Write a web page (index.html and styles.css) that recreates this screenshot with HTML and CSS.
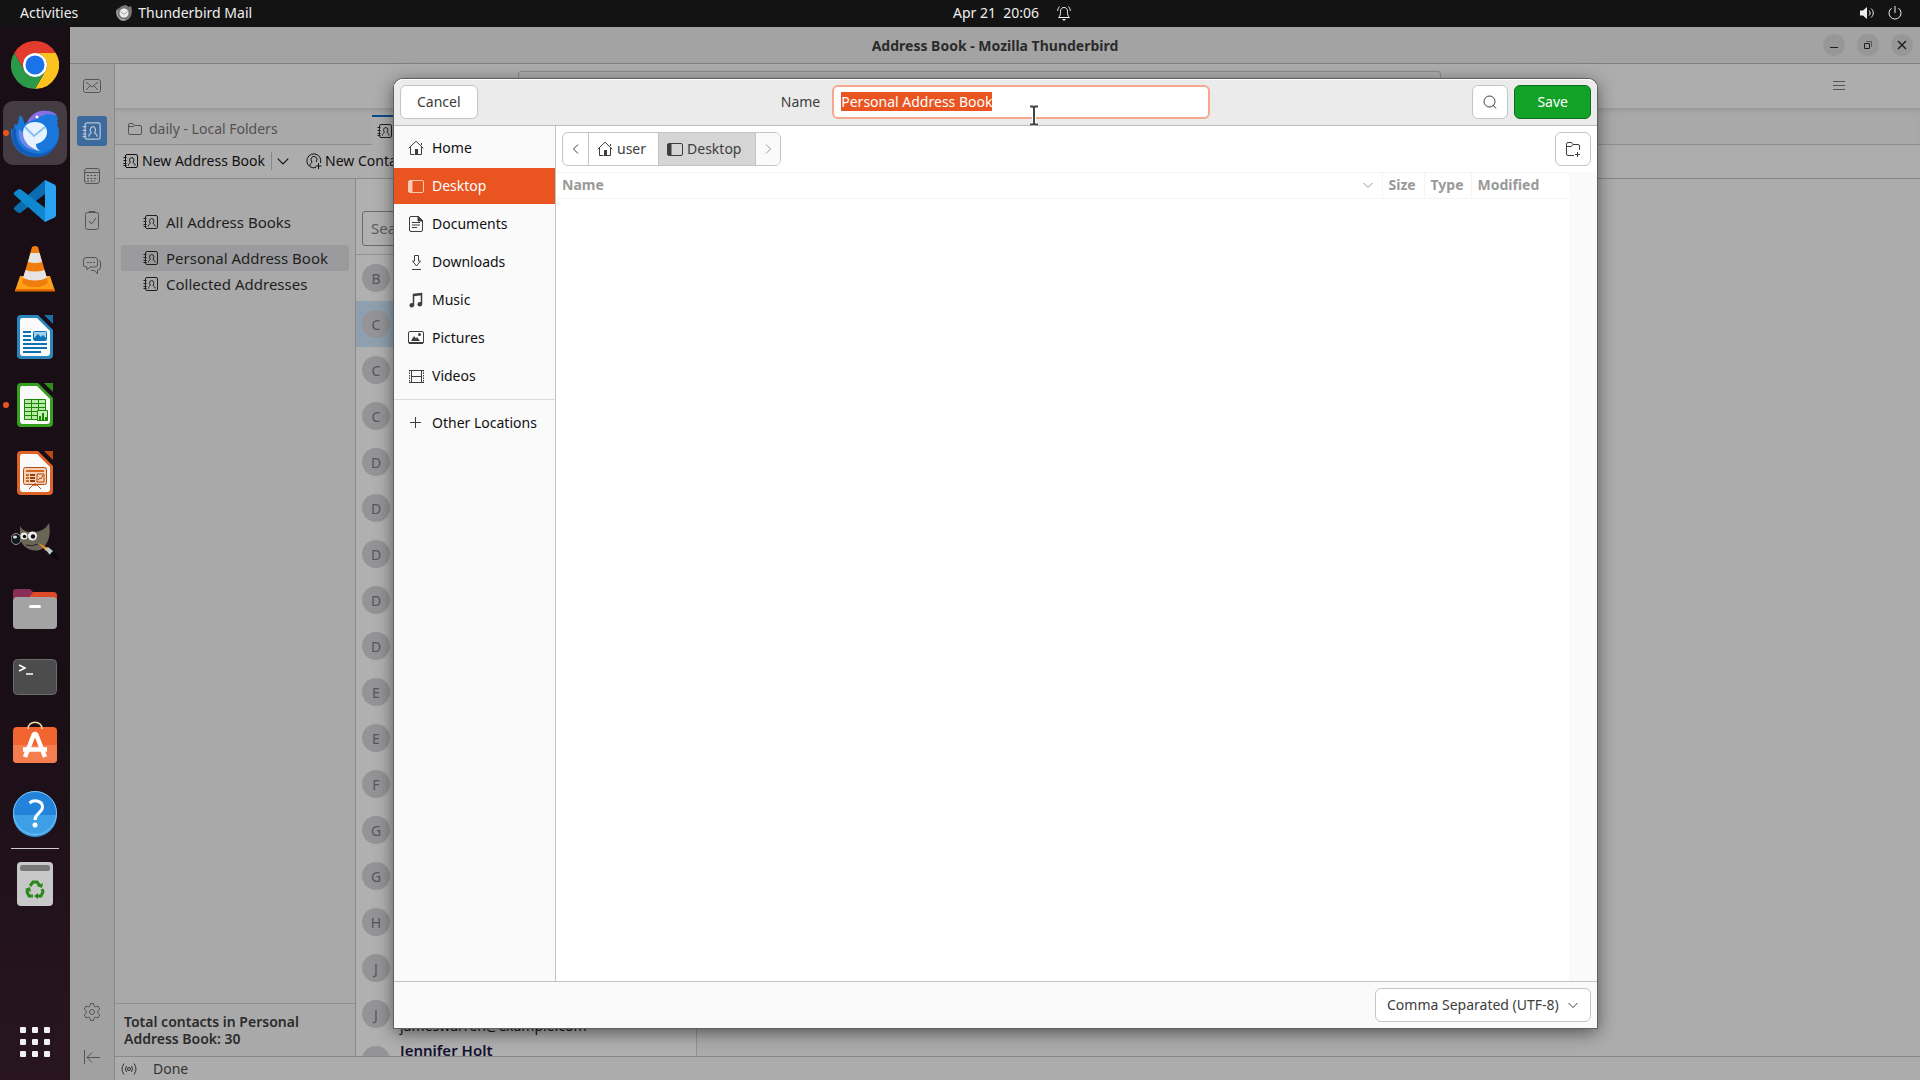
FILE: index.html
```html
<!DOCTYPE html>
<html lang="en">
<head>
  <meta charset="UTF-8" />
  <title>Address Book - Mozilla Thunderbird</title>
  <link rel="stylesheet" href="styles.css">
</head>
<body>

  <!-- shared icons -->
  <svg class="defs" aria-hidden="true">
    <symbol id="i-book" viewBox="0 0 16 16">
      <rect x="2.500" y="1.500" width="12" height="13" rx="1.500"/>
      <path d="M.5 4.500h3M.5 7.500h3M.5 10.500h3M.5 12.500h3M5.500 12.500v-1c0-1 1.800-1.200 1.800-2.200C6 7.500 6.500 4.500 8.700 4.500s2.700 3 1.400 4.800c0 1 1.900 1.200 1.900 2.200v1"/>
    </symbol>
    <symbol id="i-home" viewBox="0 0 16 16">
      <path d="M.7 8.300 8 1.200l7.300 7.100M2.500 7v7.500h4M13.500 7v7.500h-4M13.500 5V3"/>
      <path d="M7 9h3v6H7z" fill="currentColor" stroke="none"/>
    </symbol>
    <symbol id="i-desktop" viewBox="0 0 16 16">
      <rect x=".5" y="2.500" width="15" height="12" rx="1.500"/>
      <path d="M1 3h3.500v11H1z" fill="currentColor" stroke="none"/>
    </symbol>
    <symbol id="i-down" viewBox="0 0 12 12"><path d="M1.500 4 6 8.500 10.500 4"/></symbol>
  </svg>

  <header class="topbar">
    <div class="topbar-side">
      <button class="activities">Activities</button>
      <button class="app-menu">
        <svg width="16" height="16" viewBox="0 0 16 16"><path d="M1 4c2 0 4-4 9-4l3 2 2-1c2 5 1 14-7 15C2 16-1 10 1 4z" fill="#777"/><path d="M1 5c-1 7 3 10 8 10" fill="none" stroke="#bbb"/><circle cx="8" cy="8" r="4.500" fill="#eee"/><path d="m4.500 6.500 3.500 3 3.500-3" fill="none" stroke="#999"/></svg>
        Thunderbird Mail
      </button>
    </div>
    <button class="clock">
      <span>Apr 21&nbsp; 20:06</span>
      <svg class="line" width="14" height="16" viewBox="0 0 14 16"><path d="M1.500 12.500h11c-1.700-1.500-2-3-2-6 0-2.500-1.200-4-3.500-4s-3.500 1.500-3.500 4c0 3-.3 4.500-2 6zM2.500 1.500C1.500 2.500.800 4 .700 6M11.500 1.500c1 1 1.700 2.500 1.800 4.500"/><path d="M5 14h4l-2 2z" fill="currentColor" stroke="none"/></svg>
    </button>
    <div class="topbar-side topbar-right">
      <svg class="line" width="14" height="14" viewBox="0 0 14 14"><path d="M0 4.500h3L7 1v12L3 9.500H0z" fill="currentColor" stroke="none"/><path d="M9 4.500c1.500 1.500 1.500 3.500 0 5M11 2.500c3 2.500 3 6.500 0 9"/></svg>
      <svg class="line" width="14" height="14" viewBox="0 0 14 14"><path d="M7 0v7M3.500 2.200a6 6 0 1 0 7 0"/></svg>
    </div>
  </header>

  <div class="desktop">
    <nav class="dock">
      <button class="tile" aria-label="Chrome"><svg viewBox="0 0 48 48"><path d="M3.200 12A24 24 0 0 1 44.800 12H24a12 12 0 0 0-10.400 18z" fill="#e33b2e"/><path d="M24 12h20.800A24 24 0 0 1 24 48l10.400-18A12 12 0 0 0 24 12z" fill="#fcc31e"/><path d="M24 48A24 24 0 0 1 3.200 12l10.400 18a12 12 0 0 0 20.800 0z" fill="#2a9a48"/><circle cx="24" cy="24" r="12" fill="#fff"/><circle cx="24" cy="24" r="9.500" fill="#1a73e8"/></svg></button>
      <button class="tile active running" aria-label="Thunderbird"><svg viewBox="0 0 48 48"><path d="M9 6c-2 4-1 7-3 10-2-1-3 0-3 0 1 2 0 4-1 6l-2-3C-1 35 7 48 25 48c13 0 23-10 23-24 0-4-1-7-2-9h1l-1-4h1l-1-4c-2-4-8-6-14-5-7 1-13 5-16 11l-3 2C13 12 12 8 9 6z" fill="#1a78dc"/><path d="M16 14C20 5 27 1 35 2c4 0 8 1 11 4l-10-1-8 3c-4 2-8 4-12 6z" fill="#8a6ee6"/><path d="M5 20C4 36 13 44 28 45c8-1 15-6 18-13-2 10-11 16-21 16C8 47-2 34 2 19z" fill="#125bb8"/><path d="M8 20c-2 9 3 17 11 20l9 2c-6-4-10-8-12-14z" fill="#7387ea"/><path d="M12 24c0-7 5-11 12-11s12 4 12 10-4 10-11 12c0 4 2 5 4 7-9-2-17-9-17-18z" fill="#e6f3ff"/><path d="m14 18 9 9 11-9" fill="none" stroke="#8bbcf0" stroke-width="2"/><circle cx="26" cy="8" r="1.500" fill="#fff"/></svg></button>
      <button class="tile" aria-label="Visual Studio Code"><svg viewBox="0 0 48 48"><path d="M34 3 3.500 30Q2 31.500 3.500 33L7 35.500q1.500 1 3 0L34 17z" fill="#0b6cb0"/><path d="M34 45 3.500 18Q2 16.500 3.500 15L7 12.500q1.500-1 3 0L34 31z" fill="#0f88d0"/><path d="m34 3 9.500 4.500Q45 8.500 45 10v28q0 1.500-1.500 2.500L34 45z" fill="#2aa2f2"/></svg></button>
      <button class="tile" aria-label="VLC"><svg viewBox="0 0 48 48"><path d="M9 31h30l5 15H4z" fill="#ffa21a"/><path d="M4 44h40v2.500H4z" fill="#e06a00"/><path d="M21 2q3-2 6 0l10 35q-2 5-13 5t-13-5z" fill="#f07d0e"/><path d="M19.500 8h9l2.500 9q-7 2-14 0zM14.500 25q9.500 3 19 0l2.500 8q-12 5-24 0z" fill="#e4e4e4"/></svg></button>
      <button class="tile" aria-label="Writer"><svg viewBox="0 0 48 48"><path d="M10 2h17l15 15v25q0 4-4 4H10q-4 0-4-4V6q0-4 4-4z" fill="#2a86bd"/><path d="M11 5h15l13 13v22q0 3-3 3H12q-3 0-3-3V8q0-3 2-3z" fill="#fafafa"/><path d="M33 2h9v9z" fill="#1b6fa5"/><path d="M12 19h8m-8 4h8m-8 4h8m-8 4h24m-24 4h24m-24 4h18" stroke="#0b72b5" stroke-width="2"/><rect x="22.500" y="18.500" width="13" height="9" rx="1" fill="#9ed2ee" stroke="#0b72b5"/><path d="M23 27v-2l4-4 3 3 2-2 3 3v2z" fill="#0b72b5"/></svg></button>
      <button class="tile running" aria-label="Calc"><svg viewBox="0 0 48 48"><path d="M10 2h17l15 15v25q0 4-4 4H10q-4 0-4-4V6q0-4 4-4z" fill="#35a01d"/><path d="M11 5h15l13 13v22q0 3-3 3H12q-3 0-3-3V8q0-3 2-3z" fill="#fafafa"/><path d="M33 2h9v9z" fill="#2f8f18"/><path d="M13.500 18.500h21v20h-21z" fill="#b6eaa6"/><path d="M13.500 18.500h21v20h-21zM13 22.500h22m-22 4h22m-22 4h22m-22 4h22M20.500 18v21m7-21v21" stroke="#188803" fill="none"/><path d="M26.500 29.500h10v10h-10z" fill="#c5f0b8" stroke="#188803"/><path d="M29 39v-4m3 4v-7m3 7v-3" stroke="#188803" stroke-width="2"/></svg></button>
      <button class="tile" aria-label="Impress"><svg viewBox="0 0 48 48"><path d="M10 2h17l15 15v25q0 4-4 4H10q-4 0-4-4V6q0-4 4-4z" fill="#dd6429"/><path d="M11 5h15l13 13v22q0 3-3 3H12q-3 0-3-3V8q0-3 2-3z" fill="#fafafa"/><path d="M33 2h9v9z" fill="#b84a10"/><rect x="12.500" y="18.500" width="23" height="17" rx="2" fill="#f5d1b8" stroke="#b84a10"/><path d="M15 22h18m-18 4h3m-3 3h3m-3 3h3" stroke="#d2691e" stroke-width="2"/><path d="M19 26h5m-5 3h5m-5 3h5" stroke="#93400e" stroke-width="2"/><path d="M26 25h7v8h-7zM27 31l2-2 1 1 2-4M18 40l4-4h4l4 4M24 34v3" stroke="#b84a10" fill="none"/></svg></button>
      <button class="tile" aria-label="GIMP"><svg viewBox="0 0 48 48"><path d="M9 9c2 4 8 7 13 6 7 0 13-3 16-9 2 11 0 20-7 26-8 4-18 0-22-9z" fill="#6b6557"/><ellipse cx="5" cy="22" rx="5" ry="5.500" fill="#14191b" stroke="#8c9799"/><ellipse cx="4" cy="20" rx="2" ry="1.500" fill="#dde"/><circle cx="13" cy="19" r="3.500" fill="#eee"/><circle cx="21.500" cy="19" r="4.500" fill="#eee"/><circle cx="13.500" cy="19.500" r="1.800" fill="#111"/><circle cx="22" cy="19.500" r="2.200" fill="#111"/><path d="M15 28q7 2 12-1" stroke="#222" fill="none"/><path d="m27 26 10 5-2 3z" fill="#ee941e"/><path d="m34 32 3-2 5 4-3 4z" fill="#bfc8cc"/><path d="m40 36 3-2q4 4 5 9-5-1-9-5z" fill="#08080a"/></svg></button>
      <button class="tile" aria-label="Files"><svg viewBox="0 0 48 48"><path d="M2 14V7q0-3 3-3h14l3 3h20q4 0 4 4v4z" fill="#8a2e58"/><path d="M22 7h20q4 0 4 4v4H16z" fill="#dd4a25"/><rect x="2" y="12" width="44" height="32" rx="4" fill="#a3a3a3"/><rect x="18" y="20" width="12" height="3" rx="1.500" fill="#fff"/></svg></button>
      <button class="tile" aria-label="Terminal"><svg viewBox="0 0 48 48"><rect x="2.500" y="6.500" width="43" height="35" rx="4" fill="#4c4c4c" stroke="#6c6c6c"/><path d="m8 12 6 3-6 3M15 21h7" fill="none" stroke="#fff" stroke-width="1.500"/></svg></button>
      <button class="tile" aria-label="Software"><svg viewBox="0 0 48 48"><rect x="2" y="6" width="44" height="36" rx="4" fill="#f26430"/><path d="M2 24h44v14q0 4-4 4H6q-4 0-4-4z" fill="#f47e50"/><path d="M17 8c0-9 14-9 14 0" fill="none" stroke="#f3d9a4" stroke-width="1.500"/><path d="m14 36 9-23h2l9 23M12 28.500h24" fill="none" stroke="#fff" stroke-width="4.500" stroke-linejoin="bevel"/></svg></button>
      <button class="tile" aria-label="Help"><svg viewBox="0 0 48 48"><circle cx="24" cy="24" r="22" fill="#2383da"/><path d="M2 26a22 22 0 0 0 44 0z" fill="#3e9fe6"/><circle cx="24" cy="24" r="21.500" fill="none" stroke="#7fc2f4"/><path d="M18.500 14c5-4 13-2 13 4 0 6-7.500 6-7.500 13" fill="none" stroke="#fff" stroke-width="3"/><circle cx="24" cy="36" r="2.500" fill="#fff"/></svg></button>
      <hr class="dock-sep">
      <button class="tile" aria-label="Trash"><svg viewBox="0 0 48 48"><rect x="6" y="2" width="36" height="44" rx="4" fill="#c8c8c8"/><rect x="9" y="5" width="30" height="6" rx="2.500" fill="#777"/><path d="m19 26 3-4h4l3 4M31 29l1 3-2 4h-5M22 36h-4l-2-4 1-3" fill="none" stroke="#298a1c" stroke-width="3"/><path d="m26 26 5 2 1-5zM27 33v6l-4-3zM14 29l5-2 1 5z" fill="#298a1c"/></svg></button>
      <button class="tile apps" aria-label="Show Applications"><svg viewBox="0 0 48 48"><g fill="#f2f2f2"><rect x="9" y="9" width="6" height="6" rx="1"/><rect x="21" y="9" width="6" height="6" rx="1"/><rect x="33" y="9" width="6" height="6" rx="1"/><rect x="9" y="21" width="6" height="6" rx="1"/><rect x="21" y="21" width="6" height="6" rx="1"/><rect x="33" y="21" width="6" height="6" rx="1"/><rect x="9" y="33" width="6" height="6" rx="1"/><rect x="21" y="33" width="6" height="6" rx="1"/><rect x="33" y="33" width="6" height="6" rx="1"/></g></svg></button>
    </nav>

    <div class="window">
      <div class="titlebar">
        <h1>Address Book - Mozilla Thunderbird</h1>
        <div class="win-buttons">
          <button aria-label="Minimize"><svg class="line" width="10" height="10" viewBox="0 0 10 10"><path d="M1 7.500h8"/></svg></button>
          <button aria-label="Restore"><svg class="line" width="10" height="10" viewBox="0 0 10 10"><path d="M1.500 3.500h5v5h-5z"/><path d="M3 1.500h5.500V7" opacity=".5"/></svg></button>
          <button aria-label="Close"><svg class="line" width="10" height="10" viewBox="0 0 10 10"><path d="m1 1 8 8M9 1 1 9" stroke-width="1.500"/></svg></button>
        </div>
      </div>

      <div class="client">
        <nav class="spaces">
          <button aria-label="Mail"><svg class="line" width="18" height="18" viewBox="0 0 18 18"><rect x=".5" y="2.500" width="17" height="13" rx="2"/><path d="m3 5 6 5 6-5M3 13l4-4M15 13l-4-4"/></svg></button>
          <button class="current" aria-label="Address Book"><svg class="line" width="20" height="20"><use href="#i-book"/></svg></button>
          <button aria-label="Calendar"><svg class="line" width="18" height="18" viewBox="0 0 18 18"><rect x="1.500" y="1.500" width="15" height="15" rx="2.500"/><path d="M2 5.500h14"/><path d="M4 8.500h11M4 11.500h11M4 14h8" stroke-dasharray="2 1.500"/></svg></button>
          <button aria-label="Tasks"><svg class="line" width="18" height="20" viewBox="0 0 18 20"><rect x="2.500" y="1.500" width="13" height="17" rx="2"/><path d="M6 2V.5h6V2M6 10l2.500 3L13 7"/></svg></button>
          <button aria-label="Chat"><svg class="line" width="18" height="18" viewBox="0 0 18 18"><path d="M3 .5h9q2.500 0 2.500 2.500v5q0 2-2.500 2H7l-3 3v-3H3Q.5 10 .5 8V3Q.5.500 3 .500zM16 3q1.500 1 1.500 3v4q0 3-3 3v4l-3-3.500H8"/><path d="M4 5.500h8" stroke-dasharray="2 1"/></svg></button>
          <button class="settings" aria-label="Settings"><svg class="line" width="18" height="18" viewBox="0 0 18 18"><circle cx="9" cy="9" r="2.500"/><path d="M7.500.5h3l.5 2.500 1.500 1 2.500-1 1.800 3-2 1.800v2.400l2 1.800-1.800 3-2.500-1-1.500 1-.5 2.500h-3L7 15l-1.500-1L3 15l-1.800-3 2-1.800V7.800L1.200 6 3 3l2.500 1L7 3z"/></svg></button>
          <button aria-label="Collapse"><svg class="line" width="18" height="16" viewBox="0 0 18 16"><path d="M1.500 1v14M4 8.500h13M9 3.500l-5 5 5 5"/></svg></button>
        </nav>

        <div class="content">
          <div class="unified">
            <div class="global-search"></div>
            <button class="hamburger" aria-label="Menu"><svg class="line" width="12" height="12" viewBox="0 0 12 12"><path d="M0 1.500h12M0 5.500h12M0 9.500h12"/></svg></button>
          </div>
          <div class="tabs">
            <button class="tab"><svg class="line" width="14" height="14" viewBox="0 0 14 14"><path d="M.5 10.500V3q0-1.500 1.500-1.500h3l1.500 2H12q1.500 0 1.500 1.500v6q0 1.500-1.500 1.500H2Q.5 12.500.5 11zM1 4.500h5"/></svg>daily - Local Folders</button>
            <button class="tab tab-active" aria-label="Address Book"><svg class="line" width="16" height="16"><use href="#i-book"/></svg></button>
          </div>
          <div class="toolbar">
            <button><svg class="line" width="16" height="16"><use href="#i-book"/></svg>New Address Book</button>
            <button class="drop" aria-label="More"><svg class="line" width="14" height="14"><use href="#i-down"/></svg></button>
            <button><svg class="line" width="16" height="16" viewBox="0 0 16 16"><path d="M10 14.500A7 7 0 1 1 14.500 10M4 13v-1.500c0-1 2-1.300 2-2.500C4 6 5.500 3.500 8 3.500S12 6 10 9M12.500 10v6M9.500 13h6"/></svg>New Contact</button>
          </div>

          <div class="panes">
            <aside class="books">
              <ul>
                <li class="all"><svg class="line" width="16" height="16"><use href="#i-book"/></svg>All Address Books</li>
                <li class="selected"><svg class="line" width="16" height="16"><use href="#i-book"/></svg>Personal Address Book</li>
                <li><svg class="line" width="16" height="16"><use href="#i-book"/></svg>Collected Addresses</li>
              </ul>
              <p class="total">Total contacts in Personal Address Book: 30</p>
            </aside>
            <section class="contacts">
              <div class="contact-search"><input type="search" aria-label="Search contacts" placeholder="Search"></div>
              <ul>
                <li><span class="avatar">B</span></li>
                <li class="selected"><span class="avatar">C</span></li>
                <li><span class="avatar">C</span></li>
                <li><span class="avatar">C</span></li>
                <li><span class="avatar">D</span></li>
                <li><span class="avatar">D</span></li>
                <li><span class="avatar">D</span></li>
                <li><span class="avatar">D</span></li>
                <li><span class="avatar">D</span></li>
                <li><span class="avatar">E</span></li>
                <li><span class="avatar">E</span></li>
                <li><span class="avatar">F</span></li>
                <li><span class="avatar">G</span></li>
                <li><span class="avatar">G</span></li>
                <li><span class="avatar">H</span></li>
                <li><span class="avatar">J</span></li>
                <li><span class="avatar">J</span><div class="who"><b></b><span>jameswarren@example.com</span></div></li>
                <li><span class="avatar"></span><div class="who"><b>Jennifer Holt</b></div></li>
              </ul>
            </section>
          </div>
          <footer class="status">
            <svg class="line" width="16" height="14" viewBox="0 0 16 14"><circle cx="8" cy="7" r="1.500"/><path d="M5.500 4q-2 3 0 6M10.500 4q2 3 0 6M3 1.500q-4 5.500 0 11M13 1.500q4 5.500 0 11"/></svg>
            Done
          </footer>
        </div>
      </div>

      <form class="dialog" role="dialog" aria-label="Save">
        <div class="dialog-head">
          <button type="button" class="btn">Cancel</button>
          <div class="name-field">
            <label for="name">Name</label>
            <input id="name" type="text" value="Personal Address Book" autocomplete="off" spellcheck="false" autofocus>
          </div>
          <div class="head-actions">
            <button type="button" class="btn icon-btn" aria-label="Search"><svg class="line" width="16" height="16" viewBox="0 0 16 16"><circle cx="7.500" cy="7.500" r="5.500"/><path d="m11 11 3 3.500"/></svg></button>
            <button type="button" class="btn save">Save</button>
          </div>
        </div>

        <div class="dialog-body">
          <ul class="places">
            <li><a href="#"><svg class="line" width="16" height="16"><use href="#i-home"/></svg>Home</a></li>
            <li class="current"><a href="#"><svg class="line" width="16" height="16"><use href="#i-desktop"/></svg>Desktop</a></li>
            <li><a href="#"><svg class="line" width="16" height="16" viewBox="0 0 16 16"><path d="M3 .5h7.500l4 4V14q0 1.500-1.500 1.500H3Q1.500 15.500 1.500 14V2Q1.500.5 3 .5zM4 6.500h8M4 9h8M4 11.500h5"/><path d="M10 0v5h5z" fill="currentColor"/></svg>Documents</a></li>
            <li><a href="#"><svg class="line" width="16" height="16" viewBox="0 0 16 16"><path d="M6.500 1.500h4V7h2l-4 5-4-5h2zM4 15.500h9"/></svg>Downloads</a></li>
            <li><a href="#"><svg class="line" width="16" height="16" viewBox="0 0 16 16"><path d="M5.500 13V2.500l8-1V12M5.500 3.500l8-1" stroke-width="1.500"/><g fill="currentColor" stroke="none"><circle cx="3.800" cy="13.200" r="2.300"/><circle cx="11.800" cy="12.200" r="2.300"/></g></svg>Music</a></li>
            <li><a href="#"><svg class="line" width="16" height="16" viewBox="0 0 16 16"><rect x=".5" y="1.500" width="15" height="12" rx="1.500"/><path d="M1 12h14v2H1zM3 11l3-5 2 2.500L9 7l3 4z" fill="currentColor" stroke="none"/><circle cx="11.500" cy="4.500" r="1.500" fill="currentColor" stroke="none"/></svg>Pictures</a></li>
            <li><a href="#"><svg class="line" width="16" height="16" viewBox="0 0 16 16"><path d="M3.500 2.500h10v12h-10zM3.500 8.500h10"/><path d="M1.500 2v13M15.500 2v13" stroke-dasharray="1.500 1"/><path d="M1 2.500h15M1 14.500h15"/></svg>Videos</a></li>
            <li class="other"><a href="#"><svg class="line" width="16" height="16" viewBox="0 0 16 16"><path d="M2 7.500h11M7.500 2v11"/></svg>Other Locations</a></li>
          </ul>

          <div class="files">
            <div class="pathbar">
              <div class="crumbs">
                <button type="button" aria-label="Back"><svg class="line" width="12" height="12" viewBox="0 0 12 12"><path d="M8 1.500 3.500 6 8 10.500"/></svg></button>
                <button type="button"><svg class="line" width="16" height="16"><use href="#i-home"/></svg>user</button>
                <button type="button" class="here"><svg class="line" width="16" height="16"><use href="#i-desktop"/></svg>Desktop</button>
                <button type="button" class="off" aria-label="Forward"><svg class="line" width="12" height="12" viewBox="0 0 12 12"><path d="M4 1.500 8.500 6 4 10.500"/></svg></button>
              </div>
              <button type="button" class="btn icon-btn" aria-label="New folder"><svg class="line" width="16" height="16" viewBox="0 0 16 16"><path d="M9 14.500H3Q1.500 14.500 1.500 13V3Q1.500 1.500 3 1.500h3.500l1.500 2h5q1.500 0 1.500 1.500v4M2 5.500h4.500l1.500-2M12.500 11v5M10 13.500h5"/></svg></button>
            </div>
            <div class="listing">
              <table>
                <thead>
                  <tr>
                    <th class="col-name"><span>Name</span><svg class="line" width="12" height="12"><use href="#i-down"/></svg></th>
                    <th class="col-size">Size</th>
                    <th class="col-type">Type</th>
                    <th class="col-mod">Modified</th>
                  </tr>
                </thead>
              </table>
            </div>
          </div>
        </div>

        <div class="dialog-foot">
          <div class="combo">
            <select aria-label="File type"><option>Comma Separated (UTF-8)</option></select>
            <svg class="line" width="12" height="12"><use href="#i-down"/></svg>
          </div>
        </div>
      </form>
    </div>
  </div>

  <!-- mouse pointer -->
  <svg class="pointer" width="12" height="24" viewBox="0 0 12 24"><path d="M2 2.500h3l1 1 1-1h3M2 20.500h3l1-1 1 1h3M6 3v17" fill="none" stroke="#fff" stroke-width="4"/><path d="M2 2.500h3l1 1 1-1h3M2 20.500h3l1-1 1 1h3M6 3v17" fill="none" stroke="#444" stroke-width="2"/></svg>

  <script>
    // the whole name is selected when the dialog opens
    const nameInput = document.getElementById('name');
    nameInput.focus();
    nameInput.select();
  </script>

</body>
</html>
```
FILE: styles.css
```css
:root {
  --orange: #e95420;
  --line: #888;
  --dlg-line: #c4c4c4;
  --ink: #3d3d3d;
}

* {
  box-sizing: border-box;
}

body {
  margin: 0;
  height: 100vh;
  display: flex;
  flex-direction: column;
  overflow: hidden;
  font-family: "Noto Sans", "Open Sans", sans-serif;
  font-size: 14px;
  line-height: 20px;
  color: #1f1f1f;
}

button, input, select {
  font: inherit;
  color: inherit;
}

button {
  display: flex;
  align-items: center;
  justify-content: center;
  padding: 0;
  border: none;
  background: none;
  white-space: nowrap;
}

ul {
  margin: 0;
  padding: 0;
  list-style: none;
}

svg {
  flex: none;
}

.defs {
  position: absolute;
  width: 0;
  height: 0;
}

.line {
  fill: none;
  stroke: currentColor;
}

/* top bar */
.topbar {
  display: flex;
  align-items: center;
  height: 27px;
  padding-bottom: 1px;
  background: #131313;
  color: #eee;
}

.topbar-side {
  flex: 1;
  display: flex;
  padding: 0 18px 0 20px;
}

.topbar-right {
  justify-content: flex-end;
  gap: 14px;
}

.app-menu {
  margin-left: 38px;
  gap: 6px;
}

.clock {
  gap: 18px;
  margin-left: 104px;
}

/* dock */
.desktop {
  flex: 1;
  display: flex;
  min-height: 0;
}

.dock {
  flex: none;
  display: flex;
  flex-direction: column;
  align-items: center;
  gap: 4px;
  width: 70px;
  padding: 6px 0;
  background: linear-gradient(#190e15 60%, #28151f);
}

.tile {
  position: relative;
  width: 64px;
  height: 64px;
  flex: none;
  border-radius: 10px;
}

.tile svg {
  width: 48px;
  height: 48px;
}

.tile.active {
  background: #453b42;
}

.tile.running::before {
  content: "";
  position: absolute;
  left: 0;
  top: 29px;
  width: 6px;
  height: 6px;
  border-radius: 50%;
  background: var(--orange);
}

.dock-sep {
  width: 48px;
  height: 1px;
  margin: -1px 0;
  border: none;
  background: #ccc;
}

.apps {
  margin-top: auto;
}

/* thunderbird window */
.window {
  position: relative;
  flex: 1;
  min-width: 0;
  display: flex;
  flex-direction: column;
  background: #acacac;
}

.titlebar {
  display: grid;
  grid-template-columns: 1fr auto 1fr;
  align-items: center;
  height: 37px;
  border-bottom: 1px solid #808080;
  background: #a3a3a3;
}

.titlebar h1 {
  grid-column: 2;
  margin: 0;
  padding-top: 2px;
  font-size: 14px;
  line-height: 20px;
  font-weight: bold;
  color: #2b2b2b;
}

.win-buttons {
  display: flex;
  justify-content: flex-end;
  gap: 12px;
  padding-right: 7px;
}

.win-buttons button {
  width: 22px;
  height: 22px;
  border-radius: 50%;
  background: #979797;
}

.client {
  flex: 1;
  display: flex;
  min-height: 0;
}

.spaces {
  display: flex;
  flex-direction: column;
  align-items: center;
  gap: 15px;
  width: 45px;
  padding: 7px 0 8px;
  border-right: 1px solid var(--line);
  background: #a1a1a1;
  color: #555;
}

.spaces button {
  width: 30px;
  height: 30px;
  border-radius: 3px;
}

.spaces .current {
  background: #3d6a9e;
  color: #b8c4d2;
}

.spaces .settings {
  margin-top: auto;
}

.content {
  flex: 1;
  min-width: 0;
  display: flex;
  flex-direction: column;
}

.unified {
  display: flex;
  align-items: center;
  height: 44px;
  padding: 0 75px 0 403px;
  background: #adadad;
}

.global-search {
  flex: 1;
  height: 30px;
  margin-right: 392px;
  border: 1px solid #8c8c8c;
  border-radius: 3px;
}

.hamburger {
  color: #555;
}

.tabs {
  display: flex;
  height: 37px;
  border-bottom: 1px solid #8f8f8f;
  background: #a9a9a9;
  box-shadow: inset 0 5px 5px -3px #959595;
}

.tab {
  width: 254px;
  justify-content: flex-start;
  gap: 7px;
  padding: 5px 13px 0;
  color: #525252;
}

.tab-active {
  height: 37px;
  margin: 7px 0 0 3px;
  padding: 0 5px 8px;
  width: 240px;
  border-top: 2px solid #0d4a8c;
  background: #adadad;
  color: #222;
}

.toolbar {
  display: flex;
  align-items: center;
  height: 34px;
  padding: 0 8px 2px;
  border-bottom: 1px solid var(--line);
  background: #adadad;
  color: #111;
}

.toolbar button {
  gap: 3px;
}

.toolbar .drop {
  height: 18px;
  margin: 0 12px 0 6px;
  padding: 0 4px;
  border-left: 1px solid var(--line);
}

.panes {
  flex: 1;
  display: flex;
  min-height: 0;
}

.books {
  display: flex;
  flex-direction: column;
  justify-content: space-between;
  width: 241px;
  border-right: 1px solid var(--line);
  background: #a9a9a9;
  font-size: 15px;
}

.books ul {
  padding: 30px 6px;
}

.books li {
  display: flex;
  align-items: center;
  gap: 7px;
  height: 26px;
  padding: 0 0 1px 22px;
  border-radius: 3px;
}

.books .all {
  margin-bottom: 10px;
}

.books .selected {
  background: #9b9b9e;
}

.total {
  margin: 0;
  padding: 9px 40px 9px 9px;
  border-top: 1px solid #8f8f8f;
  font-size: 14px;
  font-weight: 600;
  line-height: 17px;
  color: #2b2b2b;
}

.contacts {
  width: 341px;
  border-right: 1px solid #929292;
  background: #b0b0b0;
  overflow: hidden;
}

.contact-search {
  padding: 32px 6px 8px;
  border-bottom: 1px solid #929292;
}

.contact-search input {
  display: block;
  width: 100%;
  height: 35px;
  padding: 0 8px 2px;
  border: 1px solid #6a6a6a;
  border-radius: 3px;
  background: transparent;
  font-size: 15px;
}

.contact-search input::placeholder {
  color: #5c5c5c;
}

.contacts li {
  display: flex;
  align-items: flex-start;
  gap: 10px;
  height: 46px;
  padding: 9px 6px;
}

.contacts li.selected {
  background: #909fae;
}

.avatar {
  flex: none;
  width: 28px;
  height: 28px;
  border-radius: 50%;
  background: #949496;
  color: #56565c;
  line-height: 29px;
  text-align: center;
}

.who {
  display: flex;
  flex-direction: column;
  margin-top: -7px;
  color: #111;
}

.who b {
  height: 23px;
  font-size: 15px;
  font-weight: 600;
  line-height: 23px;
  color: #141030;
}

.status {
  display: flex;
  align-items: center;
  gap: 16px;
  height: 24px;
  padding-left: 6px;
  border-top: 1px solid var(--line);
  color: #333;
}

/* save dialog */
.dialog {
  position: absolute;
  inset: 52px 323px 52px 324px;
  display: flex;
  flex-direction: column;
  border-radius: 9px 9px 0 0;
  background: #fff;
  color: var(--ink);
  box-shadow: 0 0 0 1px #5f5f5f, 0 4px 18px rgba(0, 0, 0, 0.55);
}

.dialog-head {
  display: grid;
  grid-template-columns: 1fr auto 1fr;
  align-items: center;
  height: 47px;
  padding: 0 6px;
  border-bottom: 1px solid #bbb;
  border-radius: 9px 9px 0 0;
  background: #ebebeb;
  box-shadow: inset 0 1px #fff;
}

.btn {
  height: 34px;
  padding: 0 16px;
  border: 1px solid var(--dlg-line);
  border-radius: 6px;
  background: #fff;
  justify-self: start;
}

.icon-btn {
  width: 36px;
  padding: 0;
}

.name-field {
  display: flex;
  align-items: center;
  gap: 12px;
}

.name-field input {
  width: 378px;
  height: 34px;
  padding: 0 7px 1px;
  border: 2px solid #f5a88e;
  border-radius: 6px;
  outline: none;
  background: #fff;
}

.name-field input::selection {
  background: var(--orange);
  color: #fff;
}

.head-actions {
  display: flex;
  justify-content: flex-end;
  gap: 6px;
}

.save {
  padding: 0 22px;
  border-color: #0d6f1c;
  background: #12a228;
  color: #fff;
}

.dialog-body {
  flex: 1;
  display: flex;
  min-height: 0;
}

.places {
  width: 162px;
  padding-top: 3px;
  border-right: 1px solid var(--dlg-line);
  background: #fafafa;
}

.places li {
  padding: 1px 0;
}

.places a {
  display: flex;
  align-items: center;
  gap: 8px;
  height: 36px;
  padding-left: 14px;
  color: #111;
  text-decoration: none;
}

.places svg {
  color: var(--ink);
}

.places .current a {
  background: var(--orange);
  color: #fff;
}

.places .current svg {
  color: #f9c9b8;
}

.places .other {
  margin-top: 4px;
  padding-top: 5px;
  border-top: 1px solid #dcdcdc;
}

.files {
  flex: 1;
  display: flex;
  flex-direction: column;
}

.pathbar {
  display: flex;
  justify-content: space-between;
  padding: 6px;
}

.crumbs {
  display: flex;
  height: 34px;
  border: 1px solid var(--dlg-line);
  border-radius: 6px;
  overflow: hidden;
}

.crumbs button {
  gap: 4px;
  padding: 0 12px 0 8px;
}

.crumbs button:first-child,
.crumbs button:last-child {
  width: 25px;
  padding: 0;
}

.crumbs button + button {
  border-left: 1px solid var(--dlg-line);
}

.crumbs .here {
  padding-right: 14px;
  background: #d5d5d5;
}

.crumbs .off {
  background: #fafafa;
  color: #999;
}

.listing {
  flex: 1;
  padding-right: 28px;
  background: linear-gradient(#fafafa, #fafafa) right / 28px 100% no-repeat;
}

.listing table {
  width: 100%;
  border-collapse: collapse;
  table-layout: fixed;
}

.listing th {
  height: 26px;
  padding: 0 6px 2px;
  border: 1px solid #f4f4f4;
  border-right: none;
  text-align: left;
  color: #999;
}

.listing .col-name {
  border-left: none;
}

.col-name svg {
  float: right;
  margin: 4px 2px 0;
}

.col-size {
  width: 42px;
}

.col-type {
  width: 47px;
}

.col-mod {
  width: 98px;
}

.dialog-foot {
  display: flex;
  justify-content: flex-end;
  padding: 6px;
  border-top: 1px solid var(--dlg-line);
  background: #fafafa;
}

.combo {
  position: relative;
}

.combo select {
  appearance: none;
  height: 34px;
  padding: 0 31px 0 11px;
  border: 1px solid var(--dlg-line);
  border-radius: 6px;
  background: #fff;
}

.combo svg {
  position: absolute;
  right: 12px;
  top: 11px;
  pointer-events: none;
}

.pointer {
  position: absolute;
  left: 1028px;
  top: 104px;
}
```
